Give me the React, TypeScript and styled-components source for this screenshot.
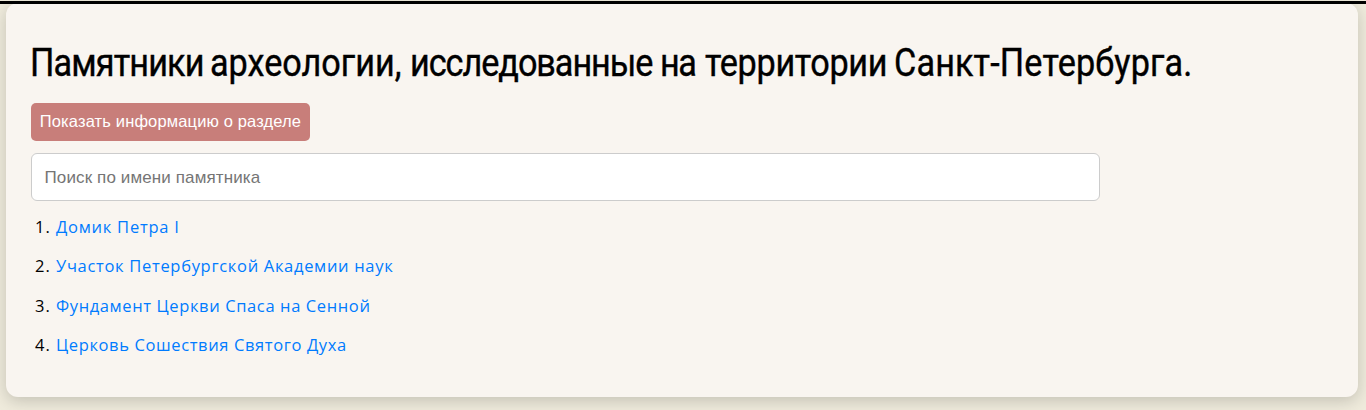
import React from "react";
import styled, { createGlobalStyle } from "styled-components";

const GlobalStyle = createGlobalStyle`
  * { box-sizing: border-box; }
  body { margin: 0; background: #efebdc; overflow: hidden; }
`;

const Page = styled.div`
  height: 410px;
  padding-top: 1px;
  overflow: hidden;
`;

const TopRule = styled.div`
  position: relative;
  height: 3px;
  background: #000;
`;

const Card = styled.main`
  width: 1352px;
  height: 394px;
  margin: -1px 0 0 6px;
  padding: 36px 25px 0 24px;
  border-radius: 12px;
  background: #f9f5f0;
  box-shadow: 0 4px 16px rgba(0, 0, 0, 0.18);
`;

const Title = styled.h1`
  display: flex;
  height: 48px;
  margin: 0;
  font: 400 38px/48px Roboto, "Liberation Sans", sans-serif;
  white-space: pre;
  color: #000;
  -webkit-text-stroke: 0.4px #000;
`;

const Word = styled.span<{ $width: number; $spacing: number }>`
  flex: 0 0 ${(p) => p.$width}px;
  min-width: 0;
  letter-spacing: ${(p) => p.$spacing}px;
  transform: scaleX(0.9);
  transform-origin: 0 50%;
`;

const InfoButton = styled.button`
  display: block;
  width: 279px;
  height: 38px;
  margin: 16px 0 12px 1px;
  padding: 0 0 2px;
  border: 0;
  border-radius: 5px;
  background: #c87e7a;
  color: #fff;
  font: 16.5px/36px "Liberation Sans", sans-serif;
  letter-spacing: 0.14px;
`;

const SearchInput = styled.input`
  display: block;
  width: 1069px;
  height: 48px;
  margin-left: 1px;
  padding: 1px 12.5px 0;
  border: 1px solid #ccc;
  border-radius: 6px;
  background: #fff;
  font: 17px "Liberation Sans", sans-serif;
  letter-spacing: 0.12px;
  &::placeholder { color: #757575; opacity: 1; }
`;

const List = styled.ol`
  margin: 6px 0 0 1px;
  padding: 0;
  list-style: none;
  font: 16.5px/39.4px "Open Sans", sans-serif;
`;

const Item = styled.li`
  display: flex;
  height: 39.4px;
  padding-left: 4px;
`;

const Num = styled.span`
  width: 21px;
  letter-spacing: 1px;
`;

const Link = styled.a<{ $spacing: number }>`
  color: #007bff;
  letter-spacing: ${(p) => p.$spacing}px;
  white-space: nowrap;
`;

const words = [
  { text: "Памятники ", width: 180, spacing: -0.95 },
  { text: "археологии, ", width: 199.5, spacing: 0 },
  { text: "исследованные ", width: 250.5, spacing: -1.15 },
  { text: "на ", width: 45, spacing: -1.5 },
  { text: "территории ", width: 188.5, spacing: -0.35 },
  { text: "Санкт-Петербурга.", width: 300, spacing: 0.15 },
];

const monuments = [
  { name: "Домик Петра I", spacing: 0.75 },
  { name: "Участок Петербургской Академии наук", spacing: 0.69 },
  { name: "Фундамент Церкви Спаса на Сенной", spacing: 0.62 },
  { name: "Церковь Сошествия Святого Духа", spacing: 0.62 },
];

export default function App() {
  return (
    <Page>
      <GlobalStyle />
      <TopRule />
      <Card>
        <Title>
          {words.map((w) => (
            <Word key={w.text} $width={w.width} $spacing={w.spacing}>{w.text}</Word>
          ))}
        </Title>
        <InfoButton>Показать информацию о разделе</InfoButton>
        <SearchInput placeholder="Поиск по имени памятника" />
        <List>
          {monuments.map((m, i) => (
            <Item key={m.name}>
              <Num>{i + 1}.</Num>
              <Link $spacing={m.spacing}>{m.name}</Link>
            </Item>
          ))}
        </List>
      </Card>
    </Page>
  );
}
